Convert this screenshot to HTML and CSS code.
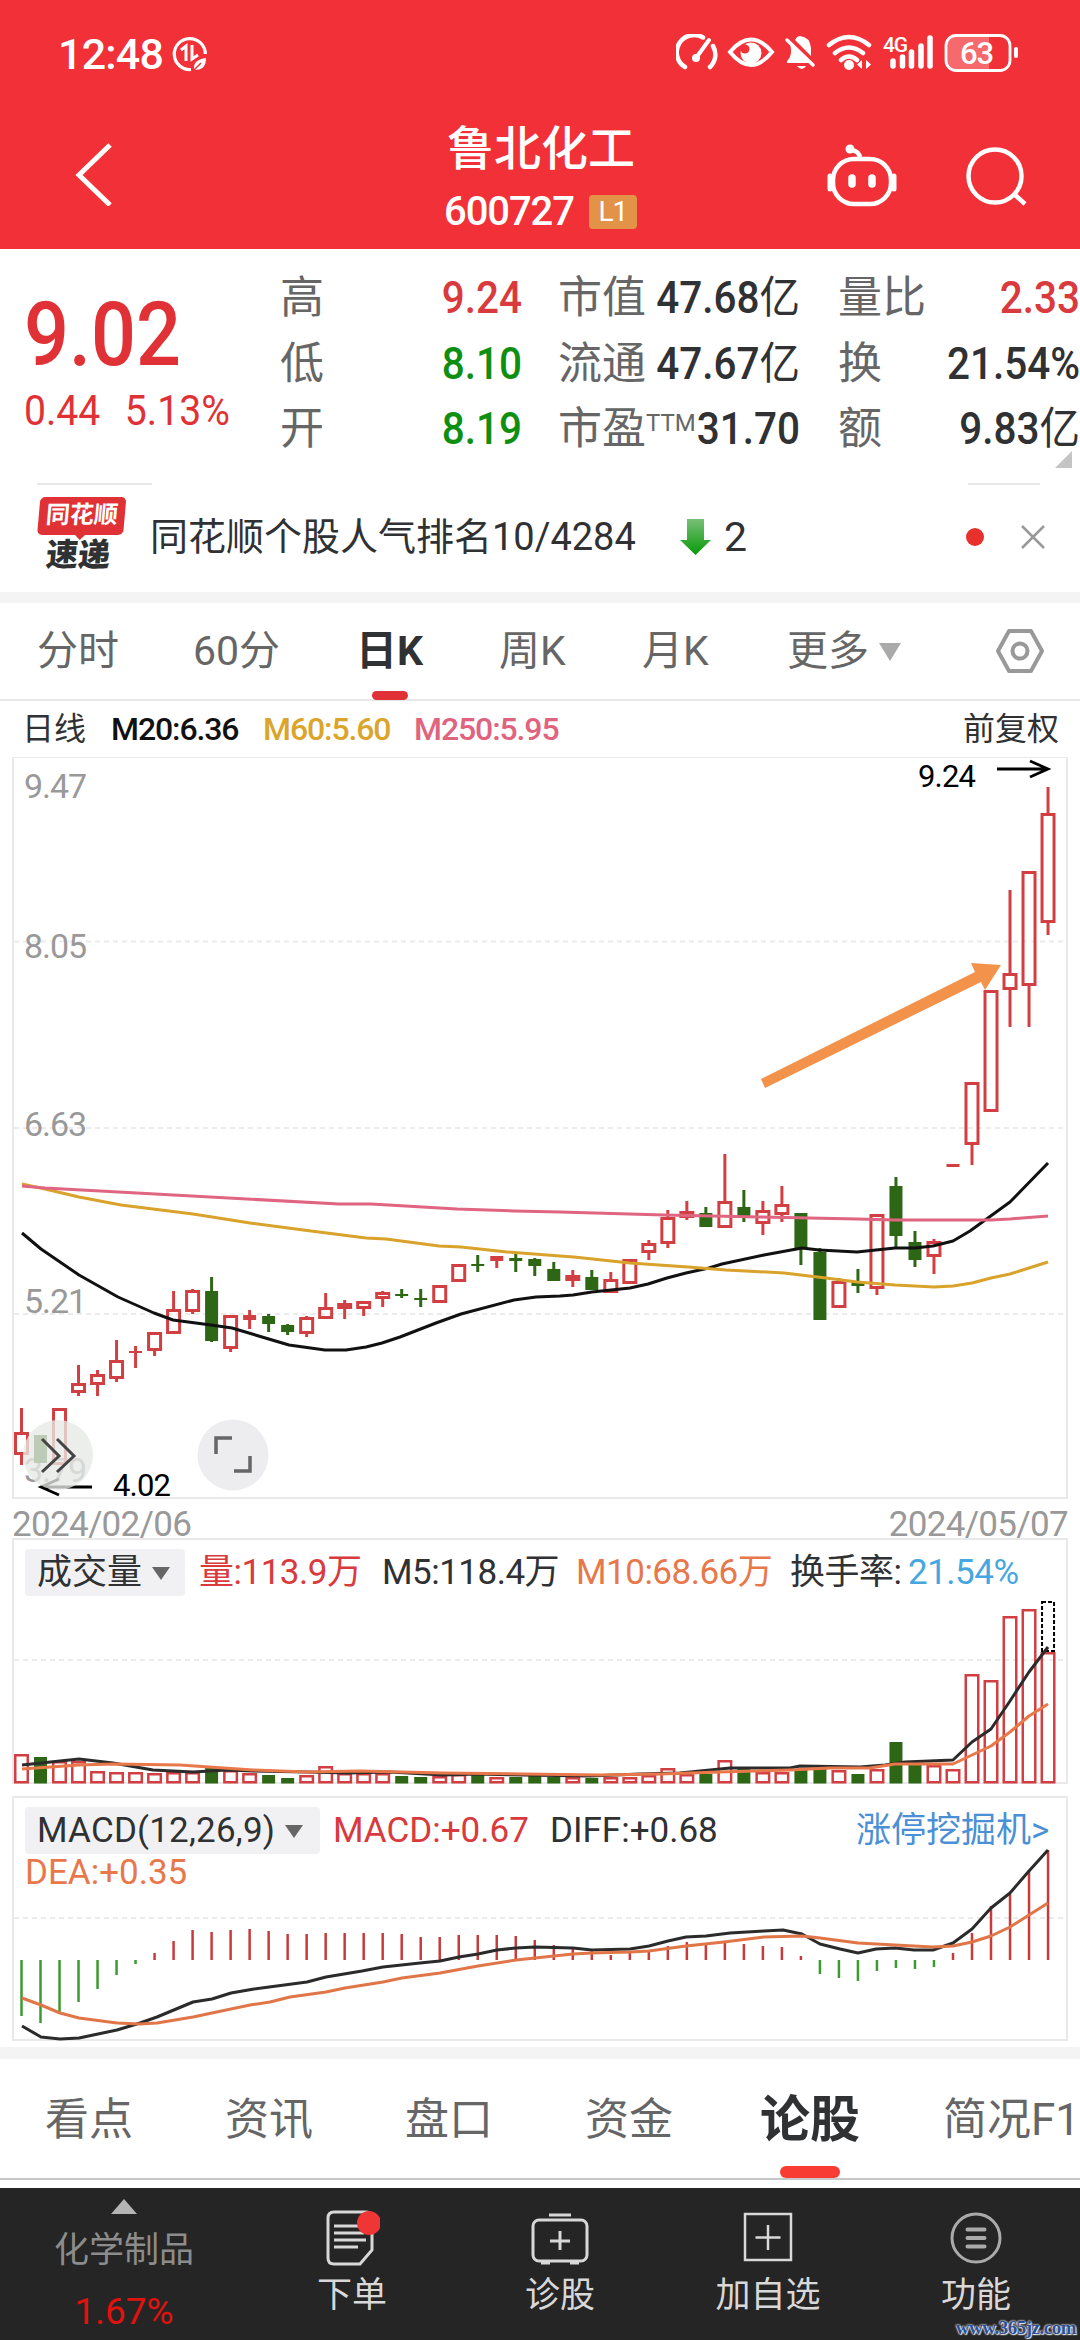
FILE: index.html
```html
<!DOCTYPE html>
<html lang="zh-CN">
<head>
  <meta charset="UTF-8">
  <meta name="viewport" content="width=device-width, initial-scale=1.0">
  <title>鲁北化工 600727</title>
  <link rel="stylesheet" href="styles.css">
</head>
<body>

  <!-- 顶部 -->
  <header class="header">
    <div class="status-bar">
      <span class="time">12:48</span>
      <svg class="data-icon" width="36" height="36" viewBox="0 0 36 36" fill="none" stroke="#fff" stroke-width="3.2">
        <path d="M19 33.5A15.5 15.5 0 1 1 33.3 18"/>
        <path d="M9 14l5-4v15M20 9v14l6-4" stroke-width="3"/>
        <path d="M22 34c-1-8 4-11 12-12 0 9-4 12-12 12z" fill="#fff" stroke="none"/>
        <path d="M22 34l7-7" stroke="#f23037" stroke-width="1.5"/>
      </svg>
      <svg class="status-icons" width="350" height="40" viewBox="0 0 350 40" fill="none" stroke="#fff" stroke-linecap="round">
        <!-- 网速 -->
        <path d="M9 33A17 17 0 0 1 27 3.500M37 12a17 17 0 0 1-3 21" stroke-width="4.500"/>
        <path d="M33 6L20 24" stroke-width="4"/>
        <circle cx="20" cy="24" r="4" fill="#fff" stroke="none"/>
        <!-- 护眼 -->
        <path d="M54 18Q75-7 96 18Q75 44 54 18z" stroke-width="4"/>
        <circle cx="75" cy="19" r="10.500" fill="#fff" stroke="none"/>
        <circle cx="69" cy="15" r="4.500" fill="#f23037" stroke="none"/>
        <!-- 静音 -->
        <path d="M111 29h23L114 10c2 8 1 13-3 17zM119 6q2-4 5-4 10 1 11 12v8zM121 32h9q-4 6-9 0z" fill="#fff" stroke="none"/>
        <path d="M111 6l26 25" stroke-width="3.500"/>
        <!-- wifi -->
        <path d="M153 11q20-16 40 0M159 19q14-11 28 0M165 26q8-7 16 0" stroke-width="4.500"/>
        <circle cx="173" cy="31" r="5" fill="#fff" stroke="none"/>
        <path d="M186 26v9l-5-4.500zM190 26v9l5-4.500z" fill="#fff" stroke="none"/>
        <!-- 信号 -->
        <path d="M217 27v5M226.500 23v9M235.500 18v14M245 12v20M254 4v28" stroke-width="5.500"/>
        <text x="207" y="18" class="net" textLength="25">4G</text>
        <!-- 电池 -->
        <path d="M281 3h32v33h-32q-10 0-10-10V13q0-10 10-10z" fill="#f66a6e" stroke="none"/>
        <rect x="270" y="1.500" width="64" height="35" rx="10" stroke-width="2.800"/>
        <path d="M340 15v7" stroke-width="4"/>
        <text x="284" y="30" class="battery" textLength="34">63</text>
      </svg>
    </div>
    <div class="title-bar">
      <svg class="back" width="40" height="64" viewBox="0 0 40 64" fill="none" stroke="#fff" stroke-width="5"><path d="M36 3L5 33l31 30"/></svg>
      <div class="title">
        <h1>鲁北化工</h1>
        <div class="code">600727 <span class="level">L1</span></div>
      </div>
      <svg width="210" height="70" viewBox="0 0 210 70" fill="none" stroke="#fff" stroke-width="4.500">
        <rect x="8" y="19" width="58" height="45" rx="21"/>
        <path d="M35 19q0-8-9-9" stroke-linecap="round"/>
        <circle cx="25" cy="9" r="4.500" fill="#fff" stroke="none"/>
        <path d="M5 36v13M69 36v13" stroke-width="5" stroke-linecap="round"/>
        <path d="M27 38v6M47 38v6" stroke-width="7.500" stroke-linecap="round"/>
        <circle cx="170" cy="36" r="26.500"/>
        <path d="M189 54l11 10"/>
      </svg>
    </div>
  </header>

  <!-- 行情 -->
  <section class="quote">
    <div class="price">
      <strong>9.02</strong>
      <div class="change"><span>0.44</span><span>5.13%</span></div>
    </div>
    <dl class="stats">
      <dt>高</dt><dd class="red">9.24</dd>
      <dt>市值</dt><dd>47.68<i>亿</i></dd>
      <dt>量比</dt><dd class="red">2.33</dd>
      <dt>低</dt><dd class="green">8.10</dd>
      <dt>流通</dt><dd>47.67<i>亿</i></dd>
      <dt>换</dt><dd>21.54%</dd>
      <dt>开</dt><dd class="green">8.19</dd>
      <dt>市盈<sup>TTM</sup></dt><dd>31.70</dd>
      <dt>额</dt><dd>9.83<i>亿</i></dd>
    </dl>
    <span class="corner"></span>
  </section>

  <!-- 人气速递 -->
  <section class="news">
    <div class="news-logo"><b>同花顺</b><em>速递</em></div>
    <p>同花顺个股人气排名10/4284</p>
    <svg class="down" width="31" height="36" viewBox="0 0 31 36">
      <defs><linearGradient id="g" x2="0" y2="1"><stop offset="0" stop-color="#79bf79"/><stop offset="1" stop-color="#069a06"/></linearGradient></defs>
      <path d="M7 0h17v21h7L15.500 36 0 21h7z" fill="url(#g)"/>
    </svg>
    <span class="rank">2</span>
    <span class="dot"></span>
    <svg width="24" height="24" viewBox="0 0 24 24" stroke="#999" stroke-width="2.500"><path d="M1 1l22 22M23 1L1 23"/></svg>
  </section>

  <!-- K线周期 -->
  <nav class="period">
    <a>分时</a><a>60分</a><a class="active">日K</a><a>周K</a><a>月K</a><a>更多<i class="tri"></i></a>
    <svg width="50" height="46" viewBox="0 0 50 46" fill="none" stroke="#999" stroke-width="4"><path d="M14 3h22l11 20-11 20H14L3 23z" stroke-linejoin="round"/><circle cx="25" cy="23" r="7.500"/></svg>
  </nav>

  <div class="ma-legend">
    <span class="cn">日线</span><span class="black">M20:6.36</span><span class="yellow">M60:5.60</span><span class="pink">M250:5.95</span><span class="cn">前复权</span>
  </div>

  <svg class="chart" id="kline" width="1080" height="743" viewBox="0 757 1080 743"></svg>

  <div class="dates"><span>2024/02/06</span><span>2024/05/07</span></div>

  <!-- 成交量 -->
  <section class="panel">
    <svg class="chart" id="volume" width="1080" height="258" viewBox="0 1537 1080 258"></svg>
    <div class="legend vol-legend">
      <span class="select">成交量<i class="tri"></i></span>
      <span class="red">量:113.9万</span><span>M5:118.4万</span><span class="orange">M10:68.66万</span><span>换手率:</span><span class="blue">21.54%</span>
    </div>
  </section>

  <!-- MACD -->
  <section class="panel">
    <svg class="chart" id="macd" width="1080" height="251" viewBox="0 1795 1080 251"></svg>
    <div class="legend macd-legend">
      <span class="select">MACD(12,26,9)<i class="tri"></i></span>
      <span class="red">MACD:+0.67</span><span>DIFF:+0.68</span><span class="link">涨停挖掘机&gt;</span>
      <span class="orange dea">DEA:+0.35</span>
    </div>
  </section>

  <nav class="sections">
    <a>看点</a><a>资讯</a><a>盘口</a><a>资金</a><a class="active">论股</a><a>简况F1</a>
  </nav>

  <!-- 底部工具栏 -->
  <footer class="toolbar">
    <div class="sector"><i></i><span>化学制品</span><b>1.67%</b></div>
    <div class="tool">
      <svg width="56" height="58" viewBox="0 0 56 58" fill="none" stroke="#d8d8d8" stroke-width="3"><path d="M10 4h32q6 0 6 6v32L36 56H10q-6 0-6-6V10q0-6 6-6z"/><path d="M10 18h24M10 25h30M10 32h32M10 39h24"/><circle cx="45" cy="15" r="12" fill="#f03535" stroke="none"/></svg>
      <span>下单</span>
    </div>
    <div class="tool">
      <svg width="60" height="58" viewBox="0 0 60 58" fill="none" stroke="#d8d8d8" stroke-width="3"><rect x="3" y="12" width="54" height="41" rx="6"/><path d="M19 7h22M30 23v19M20 33h20M11 55h9M40 55h9"/></svg>
      <span>诊股</span>
    </div>
    <div class="tool">
      <svg width="56" height="58" viewBox="0 0 56 58" fill="none" stroke="#d8d8d8" stroke-width="2.500"><rect x="5" y="6" width="46" height="46"/><path d="M28 17v25M15.500 29.500h25"/></svg>
      <span>加自选</span>
    </div>
    <div class="tool">
      <svg width="56" height="58" viewBox="0 0 56 58" fill="none" stroke="#aaa" stroke-width="3"><circle cx="28" cy="30" r="24"/><path d="M19.500 21.500h17M19.500 30h17M19.500 38.500h17" stroke-width="4" stroke-linecap="round"/></svg>
      <span>功能</span>
    </div>
    <span class="watermark">www.365jz.com</span>
  </footer>

  <script src="chart.js"></script>
</body>
</html>
```
FILE: styles.css
```css
* {
  box-sizing: border-box;
}

body {
  margin: 0;
  width: 1080px;
  height: 2340px;
  overflow: hidden;
  background: #fff;
  color: #303133;
  font-family: Roboto, "Noto Sans CJK SC", sans-serif;
}

h1, p, dl, dd {
  margin: 0;
}

i, em {
  font-style: normal;
}

svg {
  display: block;
  flex: none;
}

.red { color: #d93a3d; }
.green { color: #0f8f12; }
.black { color: #111; }
.yellow { color: #dba52b; }
.pink { color: #e0637f; }
.orange { color: #e8784a; }
.blue { color: #46a7e0; }

/* 顶部 */
.header {
  height: 249px;
  background: #f23037;
  color: #fff;
}

.status-bar {
  display: flex;
  align-items: center;
  height: 108px;
  padding-left: 58px;
}

.time {
  width: 114px;
  font-size: 43px;
  font-weight: 500;
  letter-spacing: -0.8px;
}

.status-icons {
  margin-left: 468px;
}

.net {
  font-size: 21px;
  font-weight: 500;
  fill: #fff;
  stroke: none;
}

.battery {
  font-size: 31px;
  font-weight: 500;
  fill: #fff;
  stroke: none;
}

.title-bar {
  display: flex;
  align-items: center;
  height: 141px;
  padding-left: 74px;
}

.title-bar > svg {
  margin-top: -8px;
}

.title-bar > .back {
  margin-top: -10px;
}

.title {
  width: 330px;
  margin-left: 333px;
  margin-right: 48px;
}

.title h1 {
  font-size: 47px;
  font-weight: 500;
  line-height: 64px;
  margin-top: 3px;
}

.code {
  display: flex;
  align-items: center;
  margin-left: -3px;
  font-size: 40px;
  font-weight: 500;
  line-height: 62px;
  letter-spacing: -1.1px;
}

.level {
  margin-left: 15px;
  width: 48px;
  height: 34px;
  border-radius: 4px;
  background: #e29348;
  font-size: 28px;
  font-weight: 400;
  line-height: 34px;
  text-align: center;
}

/* 行情 */
.quote {
  position: relative;
  display: flex;
  height: 234px;
  padding-top: 17px;
}

.price {
  width: 280px;
  padding-left: 24px;
  color: #e03236;
}

.price strong {
  display: block;
  height: 106px;
  margin-top: 16px;
  font-size: 89px;
  font-weight: 500;
  line-height: 106px;
  transform: scaleX(0.89);
  transform-origin: left;
}

.change {
  display: flex;
  gap: 27px;
  font-size: 43px;
  line-height: 44px;
  transform: scaleX(0.91);
  transform-origin: left;
}

.stats {
  display: grid;
  grid-template-columns: 90px 152px 164px 114px 162px 118px;
  grid-auto-rows: 65.5px;
  font-size: 44px;
  line-height: 65px;
  white-space: nowrap;
}

.stats dt {
  color: #666;
}

.stats dt:nth-of-type(3n+2) {
  padding-left: 36px;
}

.stats dt:nth-of-type(3n) {
  padding-left: 38px;
}

.stats dd {
  display: flex;
  justify-content: flex-end;
  font-weight: 500;
  transform: scaleX(0.92);
  transform-origin: right;
}

.stats dd i {
  font-weight: 400;
}

.stats sup {
  display: inline-block;
  font-size: 24px;
  line-height: 24px;
  vertical-align: 13px;
}

.corner {
  position: absolute;
  right: 8px;
  bottom: 15px;
  border-left: 17px solid transparent;
  border-bottom: 17px solid #c4c4c4;
}

/* 人气速递 */
.news {
  display: flex;
  align-items: center;
  height: 120px;
  padding-left: 37px;
  padding-bottom: 1px;
  border-bottom: 11px solid #f4f4f5;
  background: linear-gradient(#e8e8e8, #e8e8e8) 37px 0 / 115px 2px no-repeat,
    linear-gradient(#e8e8e8, #e8e8e8) 968px 0 / 72px 2px no-repeat;
}

.news-logo {
  width: 86px;
  margin-top: -2px;
  text-align: center;
  transform: skewX(-5deg);
}

.news-logo b {
  display: block;
  height: 38px;
  border-radius: 5px;
  background: #e03236;
  color: #fff;
  font-size: 24px;
  line-height: 37px;
}

/* 气泡尖角 */
.news-logo b::after {
  content: "";
  display: block;
  width: 0;
  margin: 0 auto;
  border: 6px solid transparent;
  border-top-color: #e03236;
}

.news-logo em {
  display: block;
  font-size: 32px;
  font-weight: 900;
  line-height: 40px;
}

.news p {
  margin-left: 27px;
  width: 530px;
  font-size: 38px;
  line-height: 50px;
  white-space: nowrap;
}

.rank {
  width: 255px;
  padding-left: 13px;
  font-size: 41px;
}

.dot {
  width: 18px;
  height: 18px;
  margin-right: 37px;
  border-radius: 50%;
  background: #e8302c;
}

/* K线周期 */
.period {
  display: flex;
  align-items: center;
  height: 98px;
  padding-left: 37px;
  border-bottom: 2px solid #e8e8e8;
  color: #666;
  font-size: 41px;
}

.period a {
  position: relative;
  width: 156px;
  line-height: 98px;
}

.period a:nth-child(2) { width: 163px; }
.period a:nth-child(3) { width: 143px; }
.period a:nth-child(4) { width: 143px; }
.period a:nth-child(5) { width: 145px; }
.period a:nth-child(6) { width: 208px; }

.active {
  color: #303133;
  font-weight: 700;
}

.active::after {
  content: "";
  position: absolute;
  left: 16px;
  bottom: 0;
  width: 36px;
  height: 9px;
  border-radius: 5px;
  background: #e03236;
}

.tri {
  display: inline-block;
  border: 11px solid transparent;
  border-top: 18px solid #aaa;
  border-bottom: 0;
  margin-left: 10px;
  vertical-align: 4px;
}

.ma-legend {
  display: grid;
  grid-template-columns: 89px 152px 151px 549px 1fr;
  height: 56px;
  padding-left: 22px;
  font-size: 32px;
  font-weight: 500;
  line-height: 57px;
  letter-spacing: -1.1px;
}

.ma-legend .cn {
  font-weight: 400;
  letter-spacing: 0;
}

/* 图表 */
.dates {
  display: flex;
  justify-content: space-between;
  height: 38px;
  padding: 0 12px;
  color: #999;
  font-size: 35px;
  line-height: 49px;
  letter-spacing: -0.7px;
}

.panel {
  position: relative;
}

.legend {
  position: absolute;
  top: 11px;
  left: 25px;
  display: grid;
  width: 1055px;
  font-size: 35px;
  line-height: 48px;
  letter-spacing: -0.5px;
  white-space: nowrap;
}

.vol-legend {
  grid-template-columns: 174px 183px 194px 214px 118px 1fr;
}

.macd-legend {
  grid-template-columns: 308px 217px 306px 1fr;
  letter-spacing: 0;
}

.select {
  width: 160px;
  height: 47px;
  padding-left: 12px;
  border-radius: 4px;
  background: #f1f1f3;
  letter-spacing: 0;
}

.macd-legend .select {
  width: 295px;
  letter-spacing: 0.2px;
}

.select .tri {
  border-width: 13px 9px 0;
  border-top-color: #666;
}

.link {
  color: #4b8fd6;
}

.dea {
  line-height: 35px;
}

.axis {
  fill: #999;
  font-size: 34px;
}

.mark {
  fill: #000;
  font-size: 31px;
}

/* 下方栏目 */
.sections {
  display: flex;
  height: 133px;
  padding-left: 45px;
  border-top: 12px solid #f4f4f5;
  border-bottom: 2px solid #c8c8c8;
  color: #666;
  font-size: 44px;
  line-height: 122px;
  white-space: nowrap;
}

.sections a {
  position: relative;
  flex: none;
  width: 180px;
}

.sections .active {
  margin-left: -5px;
  width: 183px;
  font-size: 50px;
}

.sections .active::after {
  left: 20px;
  bottom: 0;
  width: 60px;
  height: 12px;
  border-radius: 6px;
  background: #f83c34;
}

/* 底部工具栏 */
.toolbar {
  position: relative;
  display: flex;
  height: 154px;
  margin-top: 8px;
  background: #252525;
  color: #d8d8d8;
  font-size: 35px;
}

.sector {
  display: flex;
  flex-direction: column;
  align-items: center;
  width: 248px;
  color: #8c8c8c;
}

.sector i {
  margin-top: 11px;
  border: 13px solid transparent;
  border-top: 0;
  border-bottom: 15px solid #b4b4b4;
}

.sector span {
  margin-top: 13px;
  line-height: 47px;
}

.sector b {
  margin-top: 15px;
  color: #e0120f;
  font-size: 37px;
  font-weight: 400;
  line-height: 46px;
}

.tool {
  display: flex;
  flex-direction: column;
  align-items: center;
  width: 208px;
  padding-top: 20px;
}

.tool span {
  margin-top: 6px;
  line-height: 48px;
}

.watermark {
  position: absolute;
  right: 4px;
  bottom: 3px;
  color: #2a4f96;
  font: bold 19px "Liberation Serif", serif;
  letter-spacing: -0.5px;
  text-shadow: 0 0 2px #fff, 0 0 2px #fff, 1px 1px 1px #ddd;
}
```
FILE: chart.js
```js
const RED = '#d23f42';
const GREEN = '#2d6614';
const FRAME = '#e9e9e9';
const STEP = 19.01;
const x = i => 21.5 + i * STEP;

// 涨跌, 最高, 实体上沿, 实体下沿, 最低, 成交量, MACD
const days = [
  ['r', 1408, 1432, 1455, 1465, 1753, 2015], ['g', 1435, 1435, 1463, 1463, 1756, 2022], ['r', 1408, 1408, 1465, 1465, 1760, 2013],
  ['r', 1365, 1383, 1393, 1396, 1760, 2001], ['r', 1370, 1374, 1385, 1396, 1770, 1988], ['r', 1340, 1360, 1379, 1382, 1771, 1974],
  ['r', 1346, 1351, 1353, 1368, 1771, 1963], ['r', 1332, 1332, 1351, 1356, 1772, 1952], ['r', 1291, 1309, 1334, 1334, 1771, 1940],
  ['r', 1289, 1290, 1312, 1314, 1771, 1929], ['g', 1277, 1291, 1341, 1342, 1767, 1931], ['r', 1315, 1315, 1349, 1352, 1769, 1929],
  ['r', 1310, 1315, 1320, 1329, 1772, 1928], ['g', 1314, 1316, 1324, 1332, 1774, 1930], ['g', 1324, 1325, 1332, 1335, 1777, 1933],
  ['r', 1316, 1317, 1334, 1337, 1774, 1933], ['r', 1293, 1307, 1319, 1319, 1765, 1932], ['r', 1300, 1303, 1309, 1319, 1772, 1932],
  ['r', 1301, 1301, 1309, 1316, 1772, 1932], ['r', 1291, 1292, 1299, 1307, 1772, 1932], ['g', 1289, 1294, 1296, 1298, 1775, 1933],
  ['g', 1289, 1298, 1300, 1307, 1776, 1936], ['r', 1285, 1285, 1303, 1303, 1775, 1936], ['r', 1264, 1264, 1282, 1282, 1773, 1934],
  ['g', 1255, 1264, 1266, 1272, 1774, 1934], ['r', 1256, 1256, 1261, 1268, 1776, 1934], ['g', 1254, 1258, 1261, 1272, 1776, 1935],
  ['g', 1258, 1259, 1266, 1276, 1775, 1939], ['g', 1262, 1269, 1281, 1281, 1776, 1944], ['r', 1270, 1275, 1281, 1287, 1776, 1947],
  ['g', 1270, 1277, 1290, 1290, 1777, 1950], ['r', 1272, 1279, 1293, 1293, 1776, 1954], ['r', 1259, 1259, 1284, 1284, 1776, 1952],
  ['r', 1240, 1243, 1253, 1260, 1774, 1951], ['r', 1210, 1217, 1244, 1248, 1767, 1945], ['r', 1201, 1211, 1218, 1220, 1773, 1941],
  ['g', 1207, 1213, 1227, 1227, 1773, 1943], ['r', 1154, 1201, 1228, 1228, 1759, 1942], ['g', 1190, 1207, 1216, 1222, 1768, 1943],
  ['r', 1201, 1210, 1224, 1235, 1771, 1945], ['r', 1186, 1204, 1215, 1222, 1771, 1946], ['g', 1213, 1213, 1248, 1265, 1769, 1955],
  ['g', 1248, 1252, 1320, 1320, 1768, 1973], ['r', 1278, 1281, 1308, 1308, 1769, 1977], ['g', 1269, 1282, 1286, 1293, 1773, 1980],
  ['r', 1214, 1214, 1289, 1295, 1768, 1970], ['g', 1177, 1186, 1236, 1248, 1741, 1967], ['g', 1231, 1242, 1260, 1267, 1763, 1968],
  ['r', 1239, 1241, 1257, 1274, 1764, 1966], ['r', 1164, 1164, 1167, 1167, 1768, 1952], ['r', 1082, 1082, 1145, 1165, 1673, 1932],
  ['r', 990, 990, 1112, 1112, 1679, 1905], ['r', 890, 973, 990, 1027, 1615, 1893], ['r', 871, 871, 986, 1027, 1608, 1869],
  ['r', 787, 813, 923, 935, 1651, 1849]
];

const ma20 = '22,1233 41,1249 79,1275 118,1297 154,1313 173,1320 211,1325 232,1328 289,1345 325,1350 346,1350 366,1347 382,1343 400,1337 436,1323 461,1314 514,1300 536,1297 560,1296 573,1295 592,1292 630,1288 648,1284 667,1278 686,1273 709,1268 722,1264 764,1255 802,1248 819,1250 857,1252 895,1248 915,1248 933,1246 953,1241 970,1231 1010,1202 1048,1163';
const ma60 = '22,1184 45,1189 79,1197 121,1205 193,1214 250,1223 311,1231 366,1238 386,1239 439,1246 461,1247 507,1252 560,1256 574,1257 630,1263 688,1267 726,1270 784,1273 826,1278 857,1282 895,1285 934,1287 953,1286 972,1283 991,1278 1010,1274 1048,1262';
const ma250 = '22,1186 45,1188 339,1204 371,1204 457,1209 514,1211 560,1212 664,1215 760,1217 857,1219 895,1220 991,1220 1010,1219 1048,1216';
const vol5 = '22,1764 79,1758 113,1762 153,1769 193,1771 227,1769 253,1770 307,1771 347,1772 390,1771 443,1774 477,1773 523,1774 590,1775 640,1773 680,1772 710,1769 730,1767 790,1767 800,1765 860,1766 885,1764 905,1761 953,1759 972,1741 991,1728 1010,1700 1029,1671 1048,1646';
const vol10 = '22,1768 79,1764 113,1763 180,1764 253,1769 307,1771 360,1770 443,1772 523,1773 600,1774 660,1773 720,1771 790,1769 830,1767 870,1767 895,1763 953,1763 972,1754 991,1745 1010,1731 1029,1715 1048,1703';
const diff = '22,2025 41,2036 60,2038 79,2037 98,2033 117,2029 140,2022 157,2016 193,2001 212,1998 231,1992 254,1988 307,1981 326,1976 362,1970 383,1966 420,1962 440,1960 459,1956 478,1953 497,1949 516,1947 535,1946 573,1947 592,1949 630,1948 649,1945 668,1940 686,1936 706,1935 730,1932 764,1930 783,1929 802,1933 820,1943 840,1948 858,1952 876,1948 895,1947 914,1949 933,1949 953,1942 972,1928 991,1907 1010,1892 1029,1870 1048,1849';
const dea = '22,1997 41,2004 60,2012 79,2017 117,2022 140,2023 157,2022 193,2016 250,2004 270,2001 290,1996 326,1991 345,1987 383,1981 402,1977 440,1972 478,1965 516,1959 535,1957 573,1953 592,1952 630,1951 649,1950 686,1945 724,1941 764,1936 802,1935 820,1937 858,1942 895,1944 933,1946 953,1945 972,1941 991,1935 1010,1926 1029,1914 1048,1902';

function line(x1, y1, x2, y2, color, width, extra = '') {
  return `<line x1="${x1}" y1="${y1}" x2="${x2}" y2="${y2}" stroke="${color}" stroke-width="${width}" ${extra}/>`;
}

function curve(points, color, width = 3) {
  return `<polyline points="${points}" fill="none" stroke="${color}" stroke-width="${width}" stroke-linejoin="round"/>`;
}

function frame(top, bottom) {
  return `<rect x="13" y="${top + 1}" width="1054" height="${bottom - top - 2}" fill="none" stroke="${FRAME}" stroke-width="2"/>`;
}

function grid(y) {
  return line(14, y, 1066, y, '#ebebeb', 2, 'stroke-dasharray="5 4"');
}

// 阳线空心，阴线实心
function box(i, up, top, bottom, stroke) {
  const h = bottom - top;
  if (!up) return `<rect x="${x(i) - 6.5}" y="${top}" width="13" height="${h}" fill="${GREEN}"/>`;
  if (h < 6) return `<rect x="${x(i) - 6.5}" y="${top}" width="13" height="${h}" fill="${RED}"/>`;
  return `<rect x="${x(i) - 7.5 + stroke / 2}" y="${top + stroke / 2}" width="${15 - stroke}" height="${h - stroke}" fill="none" stroke="${RED}" stroke-width="${stroke}"/>`;
}

function drawKline() {
  let s = frame(756, 1499) + grid(941.5) + grid(1128) + grid(1314);
  [['9.47', 798], ['8.05', 958], ['6.63', 1136], ['5.21', 1313], ['3.79', 1482]].forEach(([t, y]) => {
    s += `<text class="axis" x="24" y="${y}" textLength="63">${t}</text>`;
  });
  days.forEach(([c, high, top, bottom, low], i) => {
    const color = c === 'r' ? RED : GREEN;
    if (high < top) s += line(x(i), high, x(i), top, color, 3);
    if (low > bottom) s += line(x(i), bottom, x(i), low, color, 3);
    s += box(i, c === 'r', top, bottom, 3);
  });
  s += curve(ma20, '#111') + curve(ma60, '#d9a22b') + curve(ma250, '#df6580');
  // 最高、最低价标记
  s += '<path d="M997 769h50M1030 761l18 8-18 8M92 1487H41M59 1479l-18 8 18 8" fill="none" stroke="#000" stroke-width="2.800"/>';
  s += '<text class="mark" x="918" y="787" textLength="58">9.24</text><text class="mark" x="113" y="1496" textLength="58">4.02</text>';
  s += '<path d="M761 1079l214-107-4-9 30 2-16 25-4-8-216 106z" fill="#f2924b"/>';
  // 悬浮按钮
  s += '<circle cx="58" cy="1455" r="35" fill="#e7e9e6" fill-opacity=".78"/><path d="M42 1439l17 17-17 16M57 1439l17 17-17 16" fill="none" stroke="#444" stroke-width="3"/>';
  s += '<circle cx="233" cy="1455" r="35.5" fill="#ededf0"/><path d="M216 1454v-16h16M234 1471h16v-15" fill="none" stroke="#666" stroke-width="3.500"/>';
  document.getElementById('kline').innerHTML = s;
}

function drawVolume() {
  let s = frame(1537, 1783) + grid(1659);
  days.forEach((d, i) => {
    s += box(i, d[0] === 'r', d[5], 1782.5, 2.5);
  });
  s += `<rect x="${x(54) - 6}" y="1601" width="12" height="49" fill="none" stroke="#000" stroke-width="2" stroke-dasharray="4 2"/>`;
  s += curve(vol5, '#2b2b2b') + curve(vol10, '#e8784a');
  document.getElementById('volume').innerHTML = s;
}

function drawMacd() {
  let s = frame(1795, 2040) + grid(1917);
  days.forEach((d, i) => {
    s += line(x(i), 1959, x(i), d[6], d[6] < 1959 ? '#c93a3a' : '#3c9a30', 2.5);
  });
  s += curve(diff, '#2b2b2b') + curve(dea, '#e07648');
  document.getElementById('macd').innerHTML = s;
}

drawKline();
drawVolume();
drawMacd();
```
